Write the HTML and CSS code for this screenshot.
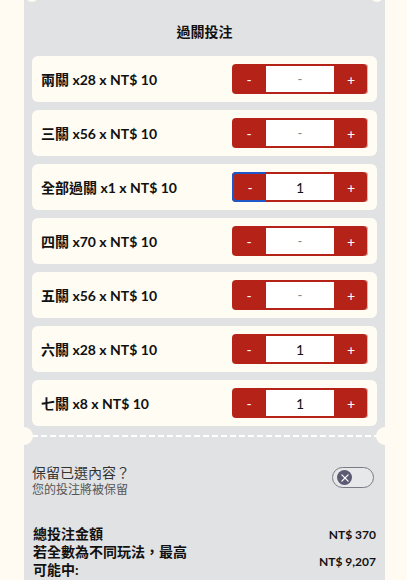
FILE: index.html
```html
<!DOCTYPE html>
<html lang="zh-Hant">
<head>
<meta charset="utf-8">
<link rel="stylesheet" href="styles.css">
</head>
<body>
<div class="panel">
  <span class="notch notch-tl"></span>
  <span class="notch notch-tr"></span>
  <h2 class="title">過關投注</h2>
  <div class="list">
    <div class="card"><span class="label">兩關 x28 x NT$ 10</span><div class="stepper"><button class="btn">-</button><div class="qty empty">-</div><button class="btn">+</button></div></div>
    <div class="card"><span class="label">三關 x56 x NT$ 10</span><div class="stepper"><button class="btn">-</button><div class="qty empty">-</div><button class="btn">+</button></div></div>
    <div class="card"><span class="label">全部過關 x1 x NT$ 10</span><div class="stepper"><button class="btn focus">-</button><div class="qty">1</div><button class="btn">+</button></div></div>
    <div class="card"><span class="label">四關 x70 x NT$ 10</span><div class="stepper"><button class="btn">-</button><div class="qty empty">-</div><button class="btn">+</button></div></div>
    <div class="card"><span class="label">五關 x56 x NT$ 10</span><div class="stepper"><button class="btn">-</button><div class="qty empty">-</div><button class="btn">+</button></div></div>
    <div class="card"><span class="label">六關 x28 x NT$ 10</span><div class="stepper"><button class="btn">-</button><div class="qty">1</div><button class="btn">+</button></div></div>
    <div class="card"><span class="label">七關 x8 x NT$ 10</span><div class="stepper"><button class="btn">-</button><div class="qty">1</div><button class="btn">+</button></div></div>
  </div>
  <div class="divider"></div>
  <div class="keep">
    <div class="keep-text">
      <div class="keep-title">保留已選內容？</div>
      <div class="keep-sub">您的投注將被保留</div>
    </div>
    <div class="toggle"><span class="knob"><svg width="9" height="9" viewBox="0 0 9 9"><path d="M1 1L8 8M8 1L1 8" stroke="#fff" stroke-width="1.4" stroke-linecap="round"/></svg></span></div>
  </div>
  <div class="summary">
    <div class="s-label">總投注金額</div>
    <div class="s-value">NT$ 370</div>
    <div class="s-label wrap">若全數為不同玩法，最高可能中:</div>
    <div class="s-value">NT$ 9,207</div>
  </div>
</div>
</body>
</html>
```
FILE: styles.css
```css
* { box-sizing: border-box; }
html, body { margin: 0; padding: 0; }
body {
  background: #fffbf2;
  font-family: Lato, "Noto Sans CJK TC", sans-serif;
  color: #111;
  width: 407px;
  height: 580px;
  overflow: hidden;
}
.panel {
  position: relative;
  margin-left: 24px;
  width: 361px;
  min-height: 580px;
  background: #e1e2e4;
}
.notch {
  position: absolute;
  width: 12px;
  height: 12px;
  border-radius: 50%;
  background: #fffbf2;
  top: -10px;
}
.notch-tl { left: 2px; }
.notch-tr { right: 2px; }
.title {
  margin: 0;
  padding-top: 22px;
  height: 56px;
  text-align: center;
  font-size: 14px;
  line-height: 20px;
  font-weight: 700;
}
.list {
  display: flex;
  flex-direction: column;
  gap: 8px;
  padding: 0 8px;
}
.card {
  height: 46px;
  background: #fffcf3;
  border-radius: 6px;
  display: flex;
  align-items: center;
  justify-content: space-between;
  padding: 0 9px;
}
.label {
  font-size: 14px;
  font-weight: 700;
  color: #111;
}
.stepper {
  display: flex;
  height: 30px;
  width: 136px;
  border-radius: 4px;
  background: #b52218;
  box-shadow: inset -1px 0 0 #e9b4ae;
}
.btn {
  width: 34px;
  height: 30px;
  border: none;
  background: transparent;
  color: #fff;
  font-family: Lato, sans-serif;
  font-size: 14px;
  padding: 0;
  margin: 0;
}
.btn.focus {
  border: 2px solid #1f57c7;
  border-right: none;
  border-radius: 4px 0 0 4px;
  background: #b52218;
}
.qty {
  width: 68px;
  height: 30px;
  background: #fff;
  border-top: 2px solid #b52218;
  border-bottom: 2px solid #b52218;
  display: flex;
  align-items: center;
  justify-content: center;
  font-size: 14px;
  color: #111;
}
.qty.empty { color: #888; font-size: 13px; }
.divider {
  position: relative;
  margin: 9px 8px 0;
  height: 2px;
  background-image: linear-gradient(to right, #ffffff 6px, transparent 6px);
  background-size: 9px 2px;
  background-repeat: repeat-x;
}
.divider::before,
.divider::after {
  content: "";
  position: absolute;
  top: -8px;
  width: 18px;
  height: 18px;
  border-radius: 50%;
  background: #fffbf2;
}
.divider::before { left: -17px; }
.divider::after { right: -17px; }
.keep {
  display: flex;
  align-items: flex-start;
  justify-content: space-between;
  padding: 27px 11px 0 8px;
}
.keep-title {
  font-family: "Noto Sans CJK TC", sans-serif;
  font-size: 14px;
  line-height: 17px;
  color: #333;
}
.keep-sub {
  font-family: "Noto Sans CJK TC", sans-serif;
  font-size: 12px;
  line-height: 16px;
  color: #555;
}
.toggle {
  margin-top: 3px;
  width: 42px;
  height: 21px;
  border: 1px solid #7a7a86;
  border-radius: 11px;
  background: #e7e8ea;
  display: flex;
  align-items: center;
  padding-left: 4px;
}
.knob {
  width: 15px;
  height: 15px;
  border-radius: 50%;
  background: #5b5a73;
  display: flex;
  align-items: center;
  justify-content: center;
}
.knob svg { display: block; width: 8px; height: 8px; }
.summary {
  display: grid;
  grid-template-columns: 160px 1fr;
  align-items: center;
  row-gap: 0;
  padding: 28px 9px 0 9px;
}
.s-label {
  font-size: 14px;
  line-height: 18px;
  font-weight: 700;
}
.s-value {
  text-align: right;
  font-size: 12px;
  font-weight: 700;
}
```
